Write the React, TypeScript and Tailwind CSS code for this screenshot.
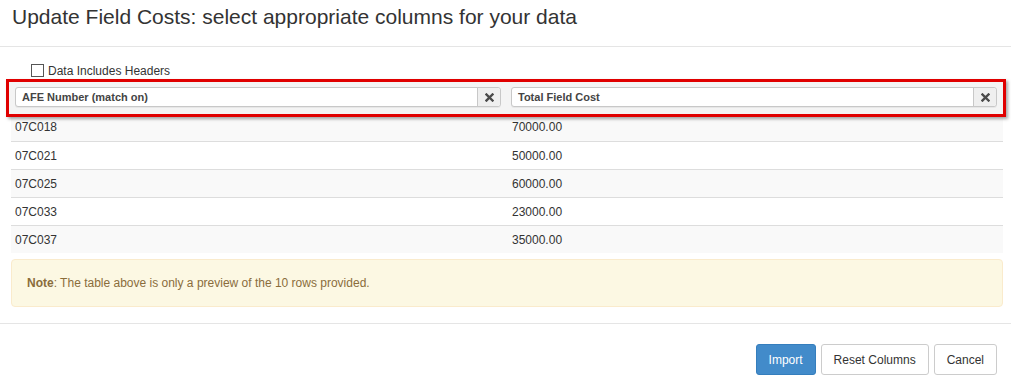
import React from "react";

const rows = [
  ["07C018", "70000.00"],
  ["07C021", "50000.00"],
  ["07C025", "60000.00"],
  ["07C033", "23000.00"],
  ["07C037", "35000.00"],
];

function XIcon() {
  return (
    <svg width="9" height="9" viewBox="0 0 9 9">
      <path d="M1.5 1.5 L7.5 7.5 M7.5 1.5 L1.5 7.5" stroke="#4a4a4a" strokeWidth="2.4" strokeLinecap="square" />
    </svg>
  );
}

function SelectBox({ label }: { label: string }) {
  return (
    <div className="flex flex-1 h-[20px] rounded-[3px] border border-[#c8c8c8] bg-white shadow-[0_1px_0_rgba(0,0,0,0.05)]">
      <div className="flex-1 flex items-center pl-[6px] text-[11px] font-bold text-[#444]">{label}</div>
      <div className="w-[23px] flex items-center justify-center border-l border-[#c8c8c8] bg-[#efefef] rounded-r-[3px]">
        <XIcon />
      </div>
    </div>
  );
}

export default function App() {
  return (
    <div className="w-[1011px] h-[385px] bg-white text-[#333] font-['Liberation_Sans',Arial,sans-serif]">
      <div className="h-[47px] border-b border-[#e5e5e5] px-[12px] pt-[4px]">
        <h1 className="text-[21px] leading-[26px] text-[#333]">Update Field Costs: select appropriate columns for your data</h1>
      </div>
      <div className="pl-[11px] pr-[8px] pt-[16px]">
        <label className="flex items-center gap-[4px] pl-[20px] h-[15px] text-[12px]">
          <span className="w-[13px] h-[13px] border border-[#555] bg-white inline-block" />
          <span>Data Includes Headers</span>
        </label>
        <div className="relative z-10 ml-[-5px] mr-[-3px] mt-[1px] border-[3px] border-[#e00000] shadow-[2px_2px_3px_rgba(0,0,0,0.35)] px-[6px] pt-[5px] pb-[8px] bg-[#f4f4f4] flex gap-[10px] h-[38px]">
          <SelectBox label="AFE Number (match on)" />
          <SelectBox label="Total Field Cost" />
        </div>
        <div className="relative mt-[-4px]">
          {rows.map(([a, b], i) => (
            <div
              key={a}
              className={`flex h-[28px] items-center text-[12px] ${i > 0 ? "border-t border-[#ddd]" : ""} ${i % 2 === 0 ? "bg-[#f9f9f9]" : "bg-white"}`}
            >
              <div className="w-[497px] pl-[4px]">{a}</div>
              <div className="flex-1 pl-[4px]">{b}</div>
            </div>
          ))}
        </div>
        <div className="mt-[6px] h-[48px] rounded-[4px] border border-[#faebcc] bg-[#fcf8e3] text-[#8a6d3b] text-[12px] flex items-center px-[15px]">
          <span><b>Note</b>: The table above is only a preview of the 10 rows provided.</span>
        </div>
      </div>
      <div className="mt-[16px] border-t border-[#e5e5e5] flex justify-end gap-[5px] pt-[20px] pr-[14px] text-[12px]">
        <button className="h-[31px] px-[12px] rounded-[3px] bg-[#428bca] border border-[#357ebd] text-white">Import</button>
        <button className="h-[31px] px-[12px] rounded-[3px] bg-white border border-[#ccc] text-[#333]">Reset Columns</button>
        <button className="h-[31px] px-[12px] rounded-[3px] bg-white border border-[#ccc] text-[#333]">Cancel</button>
      </div>
    </div>
  );
}
